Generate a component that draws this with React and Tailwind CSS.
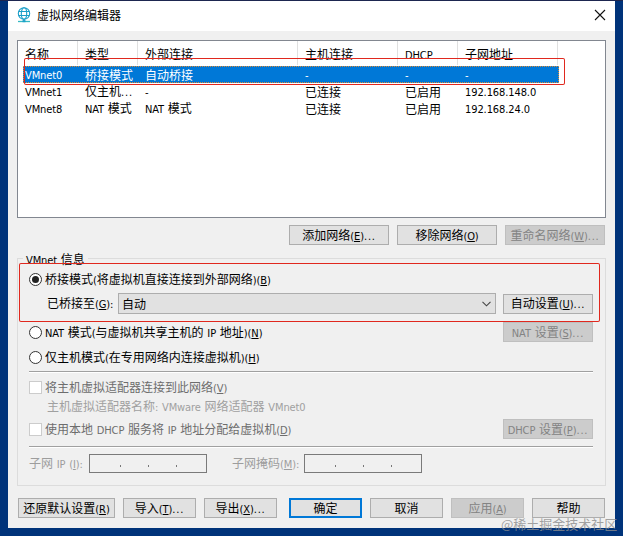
import React from "react";

const LATIN = "text-[11px] tracking-[-0.1px] [word-spacing:0.7px] font-['DejaVu_Sans_Condensed','DejaVu_Sans','Noto_Sans_CJK_SC',sans-serif] font-stretch-condensed";
const DOTS = "text-[11px] tracking-[0.8px] font-['DejaVu_Sans_Condensed','DejaVu_Sans','Noto_Sans_CJK_SC',sans-serif] font-stretch-condensed";

// Renders mixed script text; "&X" marks X as the underlined access key.
function T({ children, className = "" }) {
  const parts = children.match(/&.|\.\.\.|[\x20-\x25\x27-\x2d\x2f-\x7e]+(?:\.[\x30-\x39]+)*|[^\x20-\x7e]+/g) || [];
  return (
    <span className={`whitespace-pre ${className}`}>
      {parts.map((p, i) => {
        if (p[0] === "&") {
          return (
            <span key={i} className={`${LATIN} underline underline-offset-1`}>
              {p.slice(1)}
            </span>
          );
        }
        return (
          <span key={i} className={p === "..." ? DOTS : p.charCodeAt(0) < 127 ? LATIN : ""}>
            {p}
          </span>
        );
      })}
    </span>
  );
}

function Button({ children, disabled, primary, className = "" }) {
  const tone = disabled
    ? "border border-[#bfbfbf] bg-[#cccccc] text-[#838383]"
    : primary
      ? "border-2 border-[#0078d7] bg-[#e1e1e1]"
      : "border border-[#adadad] bg-[#e1e1e1]";
  return (
    <button className={`flex h-5 shrink-0 items-center justify-center leading-none ${tone} ${className}`}>
      <T>{children}</T>
    </button>
  );
}

function Radio({ checked, children }) {
  return (
    <label className="flex items-center gap-[3px]">
      <span className="flex size-[13px] shrink-0 items-center justify-center rounded-full border border-[#333] bg-white">
        {checked && <span className="size-[7px] rounded-full bg-[#222]" />}
      </span>
      <T>{children}</T>
    </label>
  );
}

function Check({ children }) {
  return (
    <label className="flex items-center gap-[3px] text-[#6d6d6d]">
      <span className="size-[13px] shrink-0 border border-[#cccccc] bg-white" />
      <T>{children}</T>
    </label>
  );
}

function IpField() {
  return (
    <div className="flex h-[19px] w-[118px] items-center justify-center gap-[27px] border border-[#7a7a7a] pt-[5px]">
      <span className="h-[2px] w-px bg-[#777]" />
      <span className="h-[2px] w-px bg-[#777]" />
      <span className="h-[2px] w-px bg-[#777]" />
    </div>
  );
}

const COLS = "grid grid-cols-[60px_60px_160px_100px_60px_100px]";
const HEAD = ["名称", "类型", "外部连接", "主机连接", "DHCP", "子网地址"];
const ROWS = [
  ["VMnet0", "桥接模式", "自动桥接", "-", "-", "-"],
  ["VMnet1", "仅主机...", "-", "已连接", "已启用", "192.168.148.0"],
  ["VMnet8", "NAT 模式", "NAT 模式", "已连接", "已启用", "192.168.24.0"],
];

export default function App() {
  return (
    <div className="h-[536px] w-[623px] overflow-hidden bg-[#00337a] pt-px font-['Noto_Sans_CJK_SC',sans-serif] text-[12px] leading-none text-black shadow-[inset_0_1px_0_#1d2650]">
      <div className="relative ml-2 flex h-[527px] w-[607px] flex-col bg-[#f0f0f0]">
        <header className="flex h-[30px] shrink-0 items-center bg-white pb-[2px] pl-[9px] pr-[9px]">
          <svg width="14" height="16" viewBox="0 0 14 16" fill="none" stroke="#1b9fc9" strokeWidth="1.1">
            <circle cx="7" cy="6.5" r="5.7" />
            <ellipse cx="7" cy="6.5" rx="2.7" ry="5.7" />
            <path d="M1.7 4.5h10.6M1.7 8.5h10.6M7 12v2" />
            <path d="M1 14.5h12" stroke="#35b9c4" strokeWidth="1.3" />
            <rect x="5.5" y="13.2" width="3" height="2" fill="#1b9fc9" stroke="none" />
          </svg>
          <span className="ml-[6px]">虚拟网络编辑器</span>
          <svg className="ml-auto" width="12" height="12" viewBox="0 0 12 12" stroke="#111" strokeWidth="1.1">
            <path d="M1 1l10 10M11 1L1 11" />
          </svg>
        </header>

        <section className="ml-[9px] mt-[9px] h-[178px] w-[589px] shrink-0 border border-[#828790] bg-white">
          <div className={`${COLS} h-6 w-[540px]`}>
            {HEAD.map((h) => (
              <div key={h} className="flex items-center border-r border-[#e0e0e0] pl-[7px] pt-[2px]">
                <T>{h}</T>
              </div>
            ))}
          </div>
          {ROWS.map((row, r) => (
            <div key={row[0]} className={r === 0 ? "mt-px w-[541px] pl-[5px]" : "w-[541px] pl-[5px]"}>
              <div
                className={
                  r === 0
                    ? "h-[17px] border border-dotted border-[#d88a3a] bg-[#0078d7] text-white"
                    : "h-[17px] border border-transparent"
                }
              >
                <div className={`${COLS} -ml-1.5 h-full`}>
                  {row.map((c, i) => (
                    <div key={i} className="flex items-center pl-[7px]">
                      <T>{c}</T>
                    </div>
                  ))}
                </div>
              </div>
            </div>
          ))}
        </section>

        <div className="ml-[281px] mt-[7px] flex shrink-0 gap-2">
          <Button className="w-[100px]">添加网络(&E)...</Button>
          <Button className="w-[100px]">移除网络(&O)</Button>
          <Button className="w-[100px]" disabled>重命名网络(&W)...</Button>
        </div>

        <section className="relative ml-[9px] mt-[13px] flex h-[228px] w-[589px] shrink-0 flex-col border border-[#dcdcdc] pl-[11px] pr-[12px]">
          <span className="absolute left-[5px] top-[-6px] bg-[#f0f0f0] px-[3px]">
            <T>VMnet 信息</T>
          </span>
          <div className="mt-[11px] flex h-[18px] items-center">
            <Radio checked>桥接模式(将虚拟机直接连接到外部网络)(&B)</Radio>
          </div>
          <div className="mt-[5px] flex h-[21px] items-center">
            <T className="ml-[18px] w-[71px]">已桥接至(&G):</T>
            <div className="flex h-[21px] w-[378px] items-center justify-between border border-[#adadad] bg-[#e1e1e1] pl-[3px] pr-1">
              <T>自动</T>
              <svg width="9" height="6" viewBox="0 0 9 6" fill="none" stroke="#444" strokeWidth="1.1">
                <path d="M.5 .8l4 4 4-4" />
              </svg>
            </div>
            <Button className="ml-[7px] w-[90px]">自动设置(&U)...</Button>
          </div>
          <div className="mt-[8px] flex h-5 items-center justify-between">
            <Radio>NAT 模式(与虚拟机共享主机的 IP 地址)(&N)</Radio>
            <Button className="w-[90px]" disabled>NAT 设置(&S)...</Button>
          </div>
          <div className="mt-[5px] flex h-5 items-center">
            <Radio>仅主机模式(在专用网络内连接虚拟机)(&H)</Radio>
          </div>
          <div className="mt-[4px] h-[2px] border-b border-white bg-[#a0a0a0]" />
          <div className="mt-[5px] flex h-[18px] items-center">
            <Check>将主机虚拟适配器连接到此网络(&V)</Check>
          </div>
          <div className="ml-[18px] mt-[1px] flex h-[18px] items-center text-[#a0a0a0]">
            <T>主机虚拟适配器名称: VMware 网络适配器 VMnet0</T>
          </div>
          <div className="mt-[4px] flex h-5 items-center justify-between">
            <Check>使用本地 DHCP 服务将 IP 地址分配给虚拟机(&D)</Check>
            <Button className="w-[90px]" disabled>DHCP 设置(&P)...</Button>
          </div>
          <div className="mt-[7px] h-[2px] border-b border-white bg-[#a0a0a0]" />
          <div className="mt-[6px] flex h-[19px] items-center text-[#9d9d9d]">
            <T className="w-[60px]">子网 IP (&I):</T>
            <IpField />
            <T className="ml-[25px] w-[72px]">子网掩码(&M):</T>
            <IpField />
          </div>
        </section>

        <footer className="ml-[10px] mt-[12px] flex shrink-0 gap-2">
          <Button className="w-[97px]">还原默认设置(&R)</Button>
          <Button className="w-[73px]">导入(&T)...</Button>
          <Button className="w-[73px]">导出(&X)...</Button>
          <Button className="ml-1 w-[73px]" primary>确定</Button>
          <Button className="w-[73px]">取消</Button>
          <Button className="w-[73px]" disabled>应用(&A)</Button>
          <Button className="w-[73px]">帮助</Button>
        </footer>

        <div className="pointer-events-none absolute left-4 top-[57px] z-10 h-[27px] w-[541px] rounded-[2px] shadow-[inset_0_0_0_1px_#e0281e]" />
        <div className="pointer-events-none absolute left-[11px] top-[262px] z-10 h-[59px] w-[581px] rounded-[2px] shadow-[inset_0_0_0_1px_#e0281e]" />
        <span className="absolute left-[493px] top-[516px] whitespace-nowrap text-[13px] text-[#8c8c8c]/80">
          @稀土掘金技术社区
        </span>
      </div>
    </div>
  );
}
